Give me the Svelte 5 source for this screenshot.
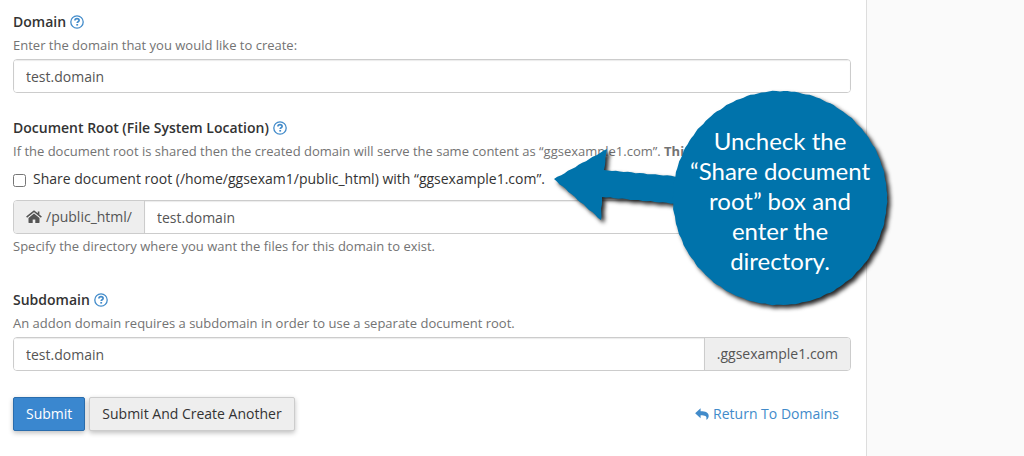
<script lang="ts">
	let domain = $state('test.domain');
	let directory = $state('test.domain');
	let subdomain = $state('test.domain');
	let shareRoot = $state(false);

	// hand-cut edge: a circle whose radius wobbles slightly
	function roughCircle(cx: number, cy: number, r: number) {
		const steps = 180;
		const points: string[] = [];
		for (let i = 0; i < steps; i++) {
			const angle = (i / steps) * Math.PI * 2;
			const wobble = Math.sin(i * 1.9) * 0.3 + Math.sin(i * 1.1) * 0.2;
			const x = cx + Math.cos(angle) * (r + wobble);
			const y = cy + Math.sin(angle) * (r + wobble);
			points.push(`${x.toFixed(1)},${y.toFixed(1)}`);
		}
		return points.join(' ');
	}

	function roughPolygon(corners: number[][]) {
		const points: string[] = [];
		corners.forEach(([x1, y1], c) => {
			const [x2, y2] = corners[(c + 1) % corners.length];
			const length = Math.hypot(x2 - x1, y2 - y1);
			const steps = Math.round(length / 4);
			for (let i = 0; i < steps; i++) {
				const t = i / steps;
				const wobble = i === 0 ? 0 : Math.sin(i * 1.9 + c) * 0.4;
				const x = x1 + (x2 - x1) * t + ((y2 - y1) / length) * wobble;
				const y = y1 + (y2 - y1) * t - ((x2 - x1) / length) * wobble;
				points.push(`${x.toFixed(1)},${y.toFixed(1)}`);
			}
		});
		return points.join(' ');
	}

	const circle = roughCircle(229, 112, 107);
	const arrow = roughPolygon([
		[3, 93],
		[56, 63],
		[53, 84],
		[132, 91],
		[128, 118],
		[51, 111],
		[50, 134]
	]);
</script>

{#snippet helpIcon(topic: string)}
	<button type="button" class="help-button" aria-label={`Help for ${topic}`}>
		<svg viewBox="0 0 14 14" width="14" height="14" aria-hidden="true">
			<circle cx="7" cy="7" r="6.2" fill="none" stroke="currentColor" stroke-width="1.3" />
			<path
				d="M4.9 5.5c.1-1.2 1-1.8 2.1-1.8 1.3 0 2.1.7 2.1 1.7 0 1.4-1.9 1.4-1.9 2.7"
				fill="none"
				stroke="currentColor"
				stroke-width="1.7"
			/>
			<rect x="6.3" y="9" width="1.8" height="1.6" fill="currentColor" />
		</svg>
	</button>
{/snippet}

<div class="page">
	<main>
		<form onsubmit={(e) => e.preventDefault()}>
			<section class="field">
				<div class="field-title">
					<label for="domain">Domain</label>
					{@render helpIcon('domain')}
				</div>
				<p class="hint">Enter the domain that you would like to create:</p>
				<div class="input-group">
					<input id="domain" type="text" bind:value={domain} />
				</div>
			</section>

			<section class="field root-field">
				<div class="field-title">
					<label for="directory">Document Root (File System Location)</label>
					{@render helpIcon('document root')}
				</div>
				<p class="hint">
					If the document root is shared then the created domain will serve the same content as
					“ggsexample1.com”. <strong>This</strong>
				</p>
				<label class="checkbox">
					<input type="checkbox" bind:checked={shareRoot} />
					<span>Share document root (/home/ggsexam1/public_html) with “ggsexample1.com”.</span>
				</label>
				<div class="input-group">
					<span class="addon">
						<svg viewBox="0 0 16 14" width="16" height="14" aria-hidden="true">
							<path
								d="M8 3.5 2.5 8v4.6c0 .3.2.5.5.5h3.7V9.4h2.6v3.7H13c.3 0 .5-.2.5-.5V8z"
								fill="currentColor"
							/>
							<path
								d="M.6 7.2 8 1.2l7.4 6M12.6 1.6v3.2"
								fill="none"
								stroke="currentColor"
								stroke-width="1.6"
							/>
						</svg>
						/public_html/
					</span>
					<input id="directory" type="text" bind:value={directory} />
				</div>
				<p class="hint below">Specify the directory where you want the files for this domain to exist.</p>
			</section>

			<section class="field">
				<div class="field-title">
					<label for="subdomain">Subdomain</label>
					{@render helpIcon('subdomain')}
				</div>
				<p class="hint">An addon domain requires a subdomain in order to use a separate document root.</p>
				<div class="input-group">
					<input id="subdomain" type="text" bind:value={subdomain} />
					<span class="addon">.ggsexample1.com</span>
				</div>
			</section>

			<div class="actions">
				<button type="submit" class="btn primary">Submit</button>
				<button type="submit" class="btn">Submit And Create Another</button>
				<a href="#domains" class="return-link">
					<svg viewBox="0 0 14 12" width="14" height="12" aria-hidden="true">
						<path
							d="M5.6.3v2.9c4.9 0 8.1 1.1 8.1 4.7 0 1.5-.8 2.9-1.9 3.7-.3.2-.6 0-.5-.4C12.3 8.2 9.8 7.3 5.6 7.3v2.9L.4 5.6c-.2-.2-.2-.5 0-.7z"
							fill="currentColor"
						/>
					</svg>
					Return To Domains
				</a>
			</div>
		</form>

		<div class="callout">
			<svg viewBox="0 0 346 230" width="346" height="230" aria-hidden="true">
				<polygon points={arrow} />
				<polygon points={circle} />
			</svg>
			<p>Uncheck the<br />“Share document<br />root” box and<br />enter the<br />directory.</p>
		</div>
	</main>
</div>

<style>
	:global(body) {
		margin: 0;
		background: #fafafa;
	}

	.page {
		min-height: 100vh;
		display: grid;
		grid-template-columns: 1fr 157px;
		font-family: 'Open Sans', sans-serif;
		font-size: 14px;
		line-height: 20px;
		color: #333;
	}

	main {
		position: relative;
		box-sizing: border-box;
		padding: 12px 15px 24px 13px;
		background: #fff;
		border-right: 1px solid #ddd;
	}

	.field {
		margin-bottom: 25px;
	}

	.root-field {
		margin-bottom: 35px;
	}

	.field-title {
		display: flex;
		align-items: center;
		gap: 4px;
		font-weight: 600;
	}

	.help-button {
		display: flex;
		padding: 0;
		border: none;
		background: none;
		color: #428bca;
		cursor: pointer;
	}

	.hint {
		margin: 4px 0 5px;
		font-size: 13px;
		line-height: 18px;
		color: #737373;
	}

	.hint.below {
		margin: 3px 0 0;
	}

	.checkbox {
		display: flex;
		align-items: center;
		gap: 7px;
		margin: 9px 0 11px;
	}

	.checkbox input {
		width: 13px;
		height: 13px;
		margin: 2px 0 0;
	}

	.input-group {
		display: flex;
		box-sizing: border-box;
		height: 34px;
		border: 1px solid #ccc;
		border-radius: 4px;
		overflow: hidden;
	}

	.input-group input {
		flex: 1;
		min-width: 0;
		padding: 2px 12px 0;
		border: none;
		outline: none;
		background: #fff;
		box-shadow: inset 0 1px 1px rgba(0, 0, 0, 0.08);
		font: inherit;
		color: #555;
	}

	.addon {
		display: flex;
		align-items: center;
		gap: 4px;
		padding: 0 12px;
		background: #eee;
		color: #555;
	}

	.addon:first-child {
		border-right: 1px solid #ccc;
	}

	.addon:last-child {
		border-left: 1px solid #ccc;
	}

	.actions {
		display: flex;
		align-items: center;
		gap: 4px;
		margin-top: 26px;
	}

	.btn {
		height: 34px;
		padding: 0 12px;
		border: 1px solid #ccc;
		border-radius: 2px;
		background: #eee;
		box-shadow: 0 2px 5px rgba(0, 0, 0, 0.25);
		font: inherit;
		color: #333;
		cursor: pointer;
	}

	.btn.primary {
		border-color: #2a6dad;
		background: #3a87cf;
		color: #fff;
	}

	.return-link {
		display: flex;
		align-items: center;
		gap: 4px;
		margin-left: auto;
		padding-right: 12px;
		color: #428bca;
		text-decoration: none;
	}

	/* sits over the form and spills past the right edge of the panel */
	.callout {
		position: absolute;
		top: 86px;
		right: -31px;
		width: 346px;
		height: 230px;
		pointer-events: none;
	}

	.callout svg {
		display: block;
		overflow: visible;
		fill: #0073ab;
		filter: drop-shadow(3px 3px 2px rgba(0, 0, 0, 0.85));
	}

	.callout p {
		position: absolute;
		top: 40px;
		right: 10px;
		width: 214px;
		margin: 0;
		font-family: Lato, sans-serif;
		font-size: 24px;
		line-height: 30px;
		text-align: center;
		color: #fff;
	}
</style>
